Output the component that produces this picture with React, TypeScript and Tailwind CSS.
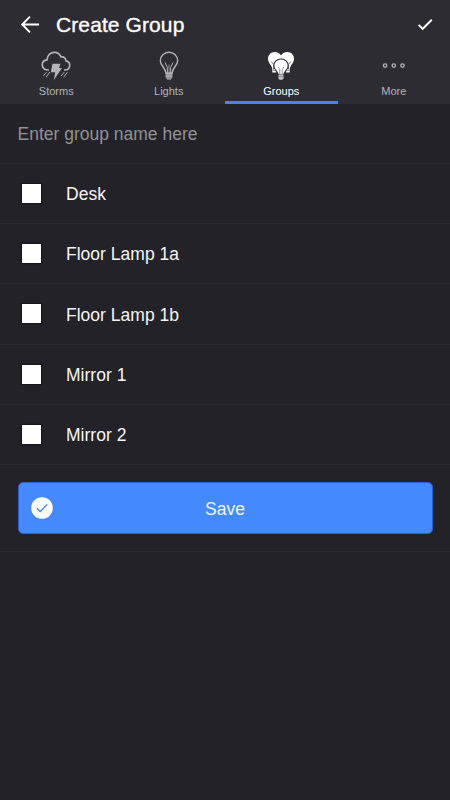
import { ReactNode, useState } from 'react'
import * as Checkbox from '@radix-ui/react-checkbox'

const availableLights = [
  'Desk',
  'Floor Lamp 1a',
  'Floor Lamp 1b',
  'Mirror 1',
  'Mirror 2'
]

function StormIcon() {
  return (
    <svg width="30" height="30" viewBox="0 0 30 30" fill="none" stroke="currentColor" strokeWidth="1.700">
      <path d="M8 19H6.500C3.500 18.500 1.300 16.500 1.300 13.700c0-2.700 2-4.600 4.700-4.900C6.400 4.500 9.300 1.300 13.400 1.300c3.100 0 5.500 1.800 6.600 4.600 2.500-.3 4.600 1.300 5 4 2.100.4 3.700 2 3.700 4.400 0 2.300-1.700 4.400-4 4.700H23" />
      <path d="M11.500 12.700h8l-1.500 4.300h3l-8.200 12 1.400-7.800h-4.400z" fill="currentColor" stroke="none" />
      <path d="M5.500 21.300l-3.200 3.500M9 21l-4 5.300M23.200 21.300l-3.200 3.700M26.300 21.300l-3.700 5" strokeWidth="1" />
    </svg>
  )
}

function LightIcon() {
  return (
    <svg width="20" height="30" viewBox="0 0 20 30" fill="none" stroke="currentColor" strokeWidth="1.400">
      <path d="M6.900 22C6.900 17 1.300 14.500 1.300 9.700 1.300 4.900 5.100 1.300 10 1.300s8.700 3.600 8.700 8.400c0 4.800-5.600 7.300-5.600 12.300z" />
      <path d="M8.400 22v-5.500L6 11.500M11.600 22v-5.500l2.400-5" strokeWidth="1" />
      <path d="M10 21V13.500" strokeWidth=".7" />
      <path d="M6.600 22h6.800v4.500l-1.600 2.300H8.200l-1.600-2.300z" fill="currentColor" fillOpacity=".75" stroke="none" />
      <path d="M6.600 22.700h6.800M6.600 25h6.800" strokeWidth="1" />
    </svg>
  )
}

function GroupIcon() {
  return (
    <svg width="28" height="30" viewBox="0 0 28 30" fill="none">
      <path d="M5.300 18.500C5.300 14.500 1 12.500 1 7.800 1 3.900 4 1 7.500 1 10.500 1 12.800 2.300 14 4.500 15.200 2.300 17.500 1 20.500 1 24 1 27 3.900 27 7.800c0 4.700-4.300 6.700-4.300 10.700v3h-4V14H9.300v7.500h-4z" fill="white" />
      <path d="M4.300 10.500l2.200 3v5M23.700 10.500l-2.200 3v5" stroke="#66656b" strokeWidth=".9" />
      <path d="M5.300 19.500h4M18.700 19.500h4" stroke="#88878c" strokeWidth=".8" />
      <path d="M11.200 24c0-3.500-4.400-4.800-4.400-9.300C6.800 11 10 8 14 8s7.200 3 7.200 6.700c0 4.500-4.400 5.800-4.400 9.300z" fill="white" stroke="#2d2c32" strokeWidth="1.100" />
      <path d="M11.200 16l1.600 2.800V24M16.800 16l-1.600 2.800V24" stroke="#66656b" strokeWidth=".7" />
      <path d="M11.500 24h5v3.500l-1.200 1.300h-2.600l-1.200-1.300z" fill="#c5c4c8" />
      <path d="M11.500 25.500h5" stroke="#77767c" strokeWidth=".7" />
    </svg>
  )
}

function MoreIcon() {
  return (
    <svg width="24" height="30" viewBox="0 0 24 30" fill="none" stroke="currentColor" strokeWidth="1.300">
      <circle cx="3.100" cy="14.600" r="1.700" />
      <circle cx="11.800" cy="14.600" r="1.700" />
      <circle cx="20.500" cy="14.600" r="1.700" />
    </svg>
  )
}

const tabs: { label: string; icon: ReactNode }[] = [
  { label: 'Storms', icon: <StormIcon /> },
  { label: 'Lights', icon: <LightIcon /> },
  { label: 'Groups', icon: <GroupIcon /> },
  { label: 'More', icon: <MoreIcon /> }
]

export default function App() {
  const [activeTab, setActiveTab] = useState('Groups')
  const [groupName, setGroupName] = useState('')
  const [lights, setLights] = useState<string[]>([])

  function handleToggleLight(light: string) {
    if (lights.includes(light)) {
      setLights(lights.filter(item => item !== light))
    } else {
      setLights([...lights, light])
    }
  }

  return (
    <div className="flex h-[800px] w-[450px] flex-col bg-[#232228] font-['Liberation_Sans',Arial,sans-serif] text-white">
      <header className="h-[104px] shrink-0 bg-[#2d2c32]">
        <div className="flex h-[49px] items-center pr-[17px] pl-5">
          <button aria-label="Back" type="button">
            <svg width="20" height="20" viewBox="0 0 20 20" fill="none" stroke="white" strokeWidth="1.900">
              <path d="M19 9.500H2.500M10 1.700L2.200 9.500l7.800 7.800" />
            </svg>
          </button>

          <h1 className="ml-4 flex-1 text-[21px] leading-6 tracking-[0.1px] [-webkit-text-stroke:0.35px_white]">
            Create Group
          </h1>

          <button aria-label="Done" type="button">
            <svg width="16" height="14" viewBox="0 0 16 14" fill="none" stroke="white" strokeWidth="1.900">
              <path d="M1.700 6.800l4 4L14.800 1.800" />
            </svg>
          </button>
        </div>

        <nav className="grid h-[55px] grid-cols-4">
          {tabs.map(tab => (
            <button
              className="flex flex-col items-center border-b-[3px] border-transparent pt-[2px] text-[#b5b4b8] data-[active=true]:border-[#4285f6] data-[active=true]:text-white"
              data-active={activeTab === tab.label}
              key={tab.label}
              onClick={() => setActiveTab(tab.label)}
              type="button"
            >
              {tab.icon}
              <span className="mt-[3px] text-[11px] leading-[14px]">{tab.label}</span>
            </button>
          ))}
        </nav>
      </header>

      <form onSubmit={event => event.preventDefault()}>
        <div className="flex h-[60px] items-center border-b border-[#2a292f] px-[17.5px] pt-[2px]">
          <input
            className="w-full bg-transparent text-[17.5px] outline-none placeholder:text-[#929193]"
            onChange={event => setGroupName(event.target.value)}
            placeholder="Enter group name here"
            type="text"
            value={groupName}
          />
        </div>

        {availableLights.map(light => (
          <label
            className="flex h-[60.2px] items-center border-b border-[#2a292f] pl-[22px] text-[17.5px]"
            key={light}
          >
            <Checkbox.Root
              checked={lights.includes(light)}
              className="flex h-[19px] w-[19px] items-center justify-center bg-white shadow-[0_0_1px_1px_#17161b]"
              onCheckedChange={() => handleToggleLight(light)}
            >
              <Checkbox.Indicator>
                <svg width="14" height="14" viewBox="0 0 14 14" fill="none" stroke="#4489fe" strokeWidth="2">
                  <path d="M2 7l3.500 3.500L12 3.500" />
                </svg>
              </Checkbox.Indicator>
            </Checkbox.Root>
            <span className="ml-[25px] pt-[1.5px] tracking-[0.02px] text-[#f5f5f6]">{light}</span>
          </label>
        ))}

        <div className="border-b border-[#2a292f] px-[17.5px] pt-[17px] pb-[17px]">
          <button
            className="flex h-[52px] w-full items-center rounded-[5px] border border-[#2a5fd4] bg-[#4489fe] px-[12.5px] text-[17.5px]"
            type="submit"
          >
            <svg width="22" height="22" viewBox="0 0 22 22" fill="none">
              <circle cx="11" cy="11" r="10.800" fill="white" />
              <path d="M6 11.300l3.200 3.200 7-7" stroke="#4489fe" strokeWidth="1.300" />
            </svg>
            <span className="flex-1 pt-[2px] pr-[22px] text-[#f0f5ff]">Save</span>
          </button>
        </div>
      </form>
    </div>
  )
}
